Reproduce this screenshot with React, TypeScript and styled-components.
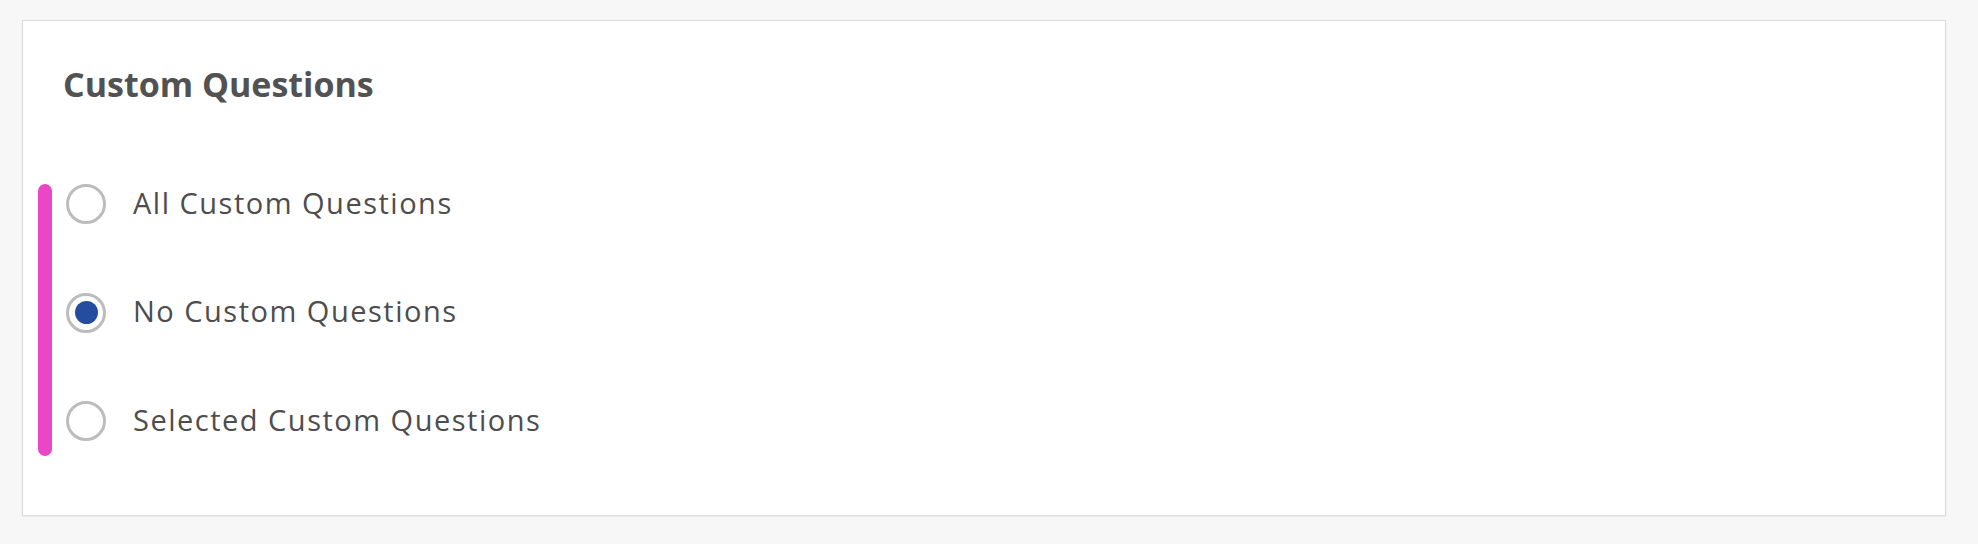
import styled, { createGlobalStyle } from 'styled-components';

const GlobalStyle = createGlobalStyle`
  html,
  body {
    margin: 0;
    padding: 0;
    background-color: #f7f7f7;
    font-family: 'Open Sans', 'Noto Sans', sans-serif;
  }
`;

export const Page = styled.div`
  padding: 20px 32px 28px 22px;
`;

export const Card = styled.section`
  display: flex;
  flex-direction: column;
  padding: 43px 0 59px 15px;
  background-color: #fff;
  border: 1px solid #dcdcdc;
  box-shadow: 0 1px 2px rgba(0, 0, 0, 0.06);
`;

export const Title = styled.h2`
  margin: 0 0 80px 25px;
  font-size: 34px;
  line-height: 40px;
  font-weight: 700;
  color: #525252;
`;

export const Group = styled.div`
  display: flex;
  gap: 14px;
`;

export const Marker = styled.div`
  width: 14px;
  border-radius: 7px;
  background-color: #ea47c6;
`;

export const Options = styled.div`
  display: flex;
  flex-direction: column;
  gap: 68.5px;
  padding-bottom: 15px;
`;

export const Option = styled.label`
  display: flex;
  align-items: center;
  gap: 27px;
  height: 40px;
  cursor: pointer;
`;

export const Radio = styled.span<{ checked?: boolean }>`
  display: flex;
  align-items: center;
  justify-content: center;
  width: 40px;
  height: 40px;
  box-sizing: border-box;
  border: 3px solid #bcbcbc;
  border-radius: 50%;
  background-color: #fff;

  &::after {
    content: '';
    display: ${(p) => (p.checked ? 'block' : 'none')};
    width: 23px;
    height: 23px;
    border-radius: 50%;
    background-color: #244c9f;
  }
`;

export const Label = styled.span`
  padding-bottom: 3px;
  font-size: 29px;
  line-height: 40px;
  letter-spacing: 1.5px;
  color: #4d4d4d;
`;

const OPTIONS = [
  { id: 'all', label: 'All Custom Questions' },
  { id: 'none', label: 'No Custom Questions' },
  { id: 'selected', label: 'Selected Custom Questions' },
];

const App = () => {
  const value = 'none';

  return (
    <>
      <GlobalStyle />
      <Page>
        <Card>
          <Title>Custom Questions</Title>
          <Group>
            <Marker />
            <Options>
              {OPTIONS.map((o) => (
                <Option key={o.id}>
                  <Radio checked={o.id === value} />
                  <Label>{o.label}</Label>
                </Option>
              ))}
            </Options>
          </Group>
        </Card>
      </Page>
    </>
  );
};

export default App;
